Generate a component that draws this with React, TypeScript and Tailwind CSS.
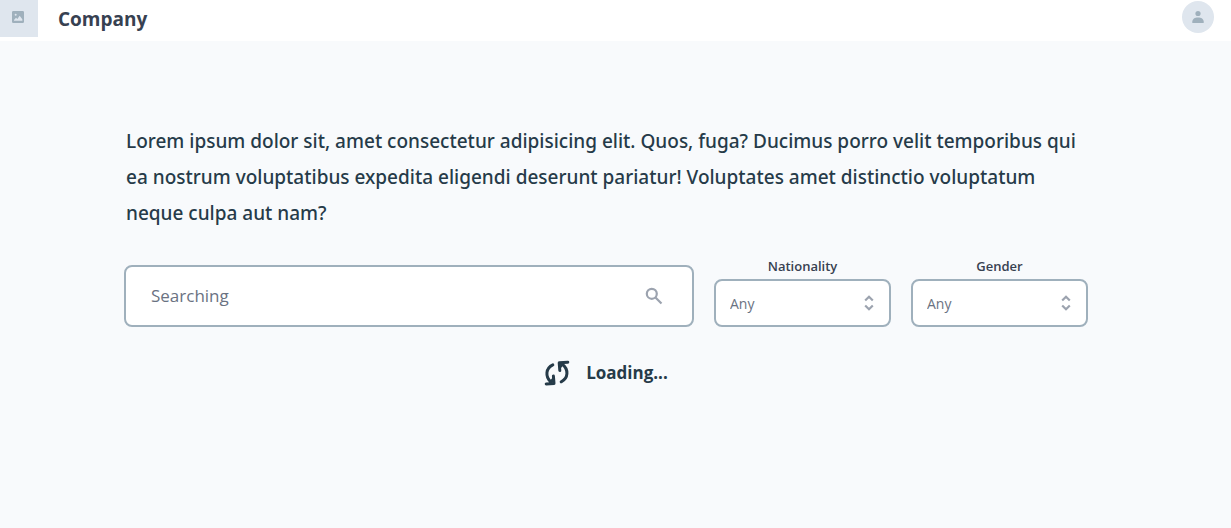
import { useState } from "react";

const OPTIONS: Record<string, string[]> = {
  Nationality: ["Any", "AU", "BR", "CA", "FR", "GB", "US"],
  Gender: ["Any", "Female", "Male"],
};

function ImageIcon() {
  return (
    <svg viewBox="0 0 24 24" className="h-4 w-4" aria-hidden="true">
      <path
        fill="#9fb0bc"
        fillRule="evenodd"
        d="M5 3h14a2 2 0 0 1 2 2v14a2 2 0 0 1-2 2H5a2 2 0 0 1-2-2V5a2 2 0 0 1 2-2zm3.500 4a1.500 1.500 0 1 0 0 3 1.500 1.500 0 0 0 0-3zM6 17.500h12.500v-2l-4-5.500-3.500 5-2-2-3 3.500z"
      />
    </svg>
  );
}

function PersonIcon() {
  return (
    <svg viewBox="0 0 12 14" className="h-[14px] w-3" fill="#9fb0bc" aria-hidden="true">
      <circle cx="6" cy="3.500" r="2.600" />
      <path d="M0.300 13v-1.200C0.300 9 2.800 7.500 6 7.500s5.700 1.500 5.700 4.300V13z" />
    </svg>
  );
}

function SearchIcon() {
  return (
    <svg viewBox="0 0 18 18" className="h-[18px] w-[18px]" fill="none" stroke="#9ca3af" strokeWidth="2.200" aria-hidden="true">
      <circle cx="6.800" cy="6.800" r="5" />
      <path d="M10.500 10.500l6 6" />
    </svg>
  );
}

function RefreshIcon() {
  return (
    <svg
      viewBox="0 0 26 26"
      className="h-[26px] w-[26px]"
      fill="none"
      stroke="#263b49"
      strokeWidth="3"
      strokeLinecap="round"
      strokeLinejoin="round"
      aria-hidden="true"
    >
      <path d="M8.800 4.800C1.800 8 0.800 16.500 7 22" />
      <path d="M2.200 24L10 23.400 9.400 16" />
      <path d="M17.200 21.800C24.200 18.500 25.200 9.500 18 4" />
      <path d="M23.800 2.200L15.200 2.800 15.800 10.500" />
      <path d="M9 19.500L6.500 22.500M16.500 6.500L18.500 3.500" />
    </svg>
  );
}

function FilterSelect({ label }: { label: string }) {
  const [value, setValue] = useState("Any");
  const id = label.toLowerCase();
  return (
    <div className="flex w-[177px] flex-col">
      <label htmlFor={id} className="mb-[5px] text-center text-[13px] leading-4 font-semibold text-[#374151]">
        {label}
      </label>
      <div className="grid items-center">
        <select
          id={id}
          value={value}
          onChange={(e) => setValue(e.target.value)}
          className="col-start-1 row-start-1 h-12 w-full appearance-none rounded-lg border-2 border-[#9fb0bc] bg-white px-3.5 pt-0.5 text-sm text-gray-500"
        >
          {OPTIONS[label].map((o) => (
            <option key={o}>{o}</option>
          ))}
        </select>
        <svg
          viewBox="0 0 10 16"
          className="pointer-events-none col-start-1 row-start-1 mr-[17px] h-4 w-[10px] justify-self-end"
          fill="none"
          stroke="#9ca3af"
          strokeWidth="2.200"
          aria-hidden="true"
        >
          <path d="M1.200 5.500L5 1.800 8.800 5.500M1.200 10.500L5 14.200 8.800 10.500" />
        </svg>
      </div>
    </div>
  );
}

export default function App() {
  const [query, setQuery] = useState("");
  return (
    <div className="min-h-screen bg-[#f8fafc] font-['Open_Sans',sans-serif] text-[#263b49]">
      <header className="flex h-[41px] items-start bg-white pr-[17px]">
        <div className="flex h-[37px] w-[38px] items-center justify-center bg-[#dfe6ee] pr-[3px] pb-[3px]">
          <ImageIcon />
        </div>
        <h1 className="ml-5 text-[19px] leading-[38px] font-bold text-[#374151]">Company</h1>
        <button
          type="button"
          aria-label="Account"
          className="mt-px ml-auto flex h-8 w-8 items-center justify-center rounded-full bg-[#dfe6ee]"
        >
          <PersonIcon />
        </button>
      </header>
      <main className="pr-[143px] pl-[124px]">
        <p className="px-0.5 pt-[82px] font-['Noto_Sans',sans-serif] text-[19px] leading-9 font-medium">
          Lorem ipsum dolor sit, amet consectetur adipisicing elit. Quos, fuga? Ducimus porro velit temporibus qui ea
          nostrum voluptatibus expedita eligendi deserunt pariatur! Voluptates amet distinctio voluptatum neque culpa
          aut nam?
        </p>
        <form className="mt-[27px] flex items-end gap-5" onSubmit={(e) => e.preventDefault()}>
          <div className="flex h-[62px] flex-1 items-center rounded-lg border-2 border-[#9fb0bc] bg-white pr-[29px] pl-[25px]">
            <input
              type="text"
              aria-label="Searching"
              placeholder="Searching"
              value={query}
              onChange={(e) => setQuery(e.target.value)}
              className="min-w-0 flex-1 bg-transparent text-[17px] text-gray-500 outline-none placeholder:text-gray-500"
            />
            <button type="submit" aria-label="Search">
              <SearchIcon />
            </button>
          </div>
          <FilterSelect label="Nationality" />
          <FilterSelect label="Gender" />
        </form>
        <div role="status" className="mt-8 flex items-center justify-center gap-4">
          <RefreshIcon />
          <span className="text-[17px] leading-7 font-bold">Loading...</span>
        </div>
      </main>
    </div>
  );
}
